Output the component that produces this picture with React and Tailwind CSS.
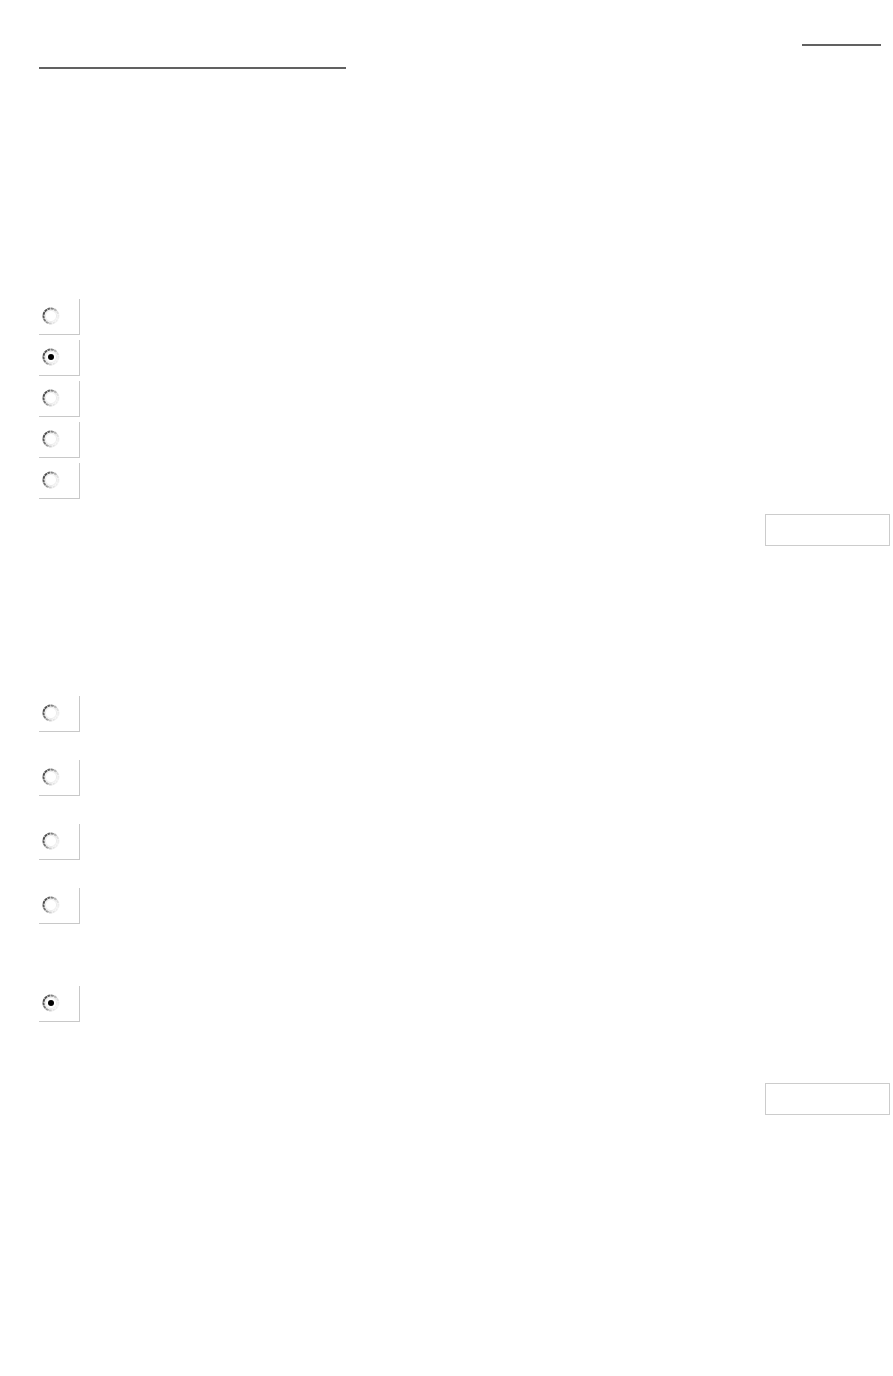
import React from 'react';

const Radio = ({ checked, id }) => (
    <svg width="18" height="18" viewBox="0 0 18 18" className="block">
        <defs>
            <linearGradient id={`ring-${id}`} x1="0" y1="0.2" x2="1" y2="0.7">
                <stop offset="0" stopColor="#3f3f3f" />
                <stop offset="0.4" stopColor="#8a8a8a" />
                <stop offset="0.75" stopColor="#dcdcdc" />
                <stop offset="1" stopColor="#f4f4f4" />
            </linearGradient>
        </defs>
        <circle cx="9" cy="9" r="7.5" fill="#ffffff" stroke={`url(#ring-${id})`} strokeWidth="2" strokeDasharray="3 0.5" />
        <circle cx="9" cy="9" r="5.6" fill="none" stroke="#ececec" strokeWidth="1" />
        {checked && <circle cx="9" cy="9" r="3" fill="#000000" />}
    </svg>
);

const RadioBox = ({ checked, id, className = '' }) => (
    <div className={`w-[41px] h-[36px] border-r border-b border-[#c8c8c8] flex items-start pl-[3px] pt-[8px] ${className}`}>
        <Radio checked={checked} id={id} />
    </div>
);

const EmptyButton = () => (
    <button className="w-[125px] h-[32px] border border-[#cccccc] bg-white" />
);

export default function App() {
    return (
        <div className="w-[893px] min-h-[1376px] bg-white relative font-['Liberation_Sans',Arial,sans-serif]">
            {/* header rules */}
            <div className="pt-[44px] flex justify-end pr-[12px]">
                <div className="w-[79px] h-[2px] bg-[#616161]" />
            </div>
            <div className="pt-[21px] pl-[39px]">
                <div className="w-[307px] h-[2px] bg-[#616161]" />
            </div>

            {/* first question */}
            <div className="pl-[39px] pt-[230px] flex flex-col gap-[5px]">
                <RadioBox id="a1" />
                <RadioBox id="a2" checked />
                <RadioBox id="a3" />
                <RadioBox id="a4" />
                <RadioBox id="a5" />
            </div>
            <div className="flex justify-end pr-[3px] pt-[15px]">
                <EmptyButton />
            </div>

            {/* second question */}
            <div className="pl-[39px] pt-[150px] flex flex-col gap-[28px]">
                <RadioBox id="b1" />
                <RadioBox id="b2" />
                <RadioBox id="b3" />
                <RadioBox id="b4" />
                <RadioBox id="b5" checked className="mt-[34px]" />
            </div>
            <div className="flex justify-end pr-[3px] pt-[61px]">
                <EmptyButton />
            </div>
        </div>
    );
}
